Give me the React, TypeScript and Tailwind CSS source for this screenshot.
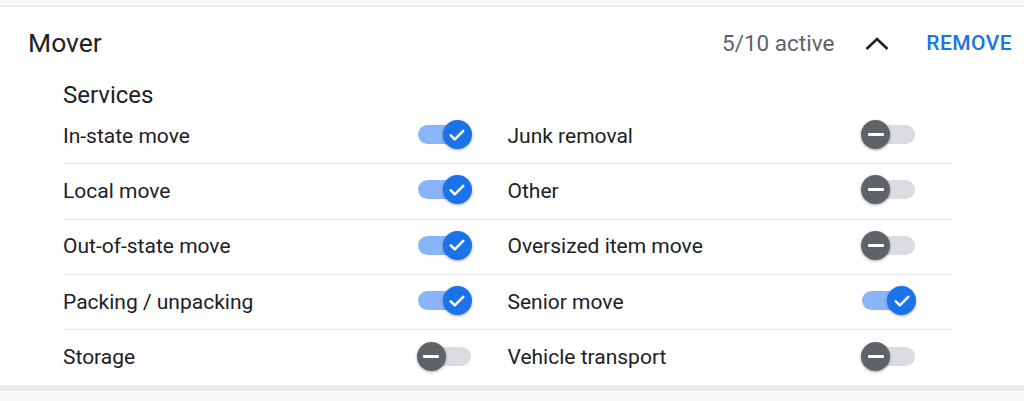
import React from "react";

const left: [string, boolean][] = [
  ["In-state move", true],
  ["Local move", true],
  ["Out-of-state move", true],
  ["Packing / unpacking", true],
  ["Storage", false],
];
const right: [string, boolean][] = [
  ["Junk removal", false],
  ["Other", false],
  ["Oversized item move", false],
  ["Senior move", true],
  ["Vehicle transport", false],
];

function Toggle({ on }: { on: boolean }) {
  return (
    <div className="relative w-[55px] h-[30px] shrink-0 -mt-[4px]">
      <div
        className={
          "absolute top-[6px] h-[19px] w-[44px] rounded-full " +
          (on ? "left-[1px] bg-[#8ab4f8]" : "left-[10px] bg-[#dadce0]")
        }
      />
      <div
        className={
          "absolute top-[1px] w-[29px] h-[29px] rounded-full flex items-center justify-center shadow-[0_1px_3px_rgba(0,0,0,0.35)] " +
          (on ? "left-[26px] bg-[#1a73e8]" : "left-0 bg-[#5f6368]")
        }
      >
        {on ? (
          <svg width="20" height="20" viewBox="0 0 24 24">
            <path d="M4.5 12.5l4.8 4.8L19.5 7" fill="none" stroke="#fff" strokeWidth="3" strokeLinecap="round" strokeLinejoin="round" />
          </svg>
        ) : (
          <div className="w-[16px] h-[3px] bg-white rounded-[1px]" />
        )}
      </div>
    </div>
  );
}

function Row({ label, on, last }: { label: string; on: boolean; last: boolean }) {
  return (
    <div
      className={
        "h-[55.3px] flex items-center justify-between pr-[36px] " +
        (last ? "" : "border-b border-[#e8eaed]")
      }
    >
      <span className="text-[21px] text-[#202124] leading-none">{label}</span>
      <Toggle on={on} />
    </div>
  );
}

export default function App() {
  return (
    <div
      className="w-[1024px] h-[401px] bg-[#f8f9fa] overflow-hidden"
      style={{ fontFamily: "Roboto, 'Noto Sans', sans-serif" }}
    >
      <div className="h-[6px] bg-[#f8f9fa]" />
      <div className="bg-white border-t border-[#e3e3e3]">
        <div className="h-[73px] flex items-center pl-[28px] pr-[12px]">
          <span className="text-[26.5px] text-[#202124] leading-none">Mover</span>
          <div className="ml-auto flex items-center">
            <span className="text-[22.5px] text-[#5f6368] leading-none">5/10 active</span>
            <svg className="ml-[30px]" width="26" height="16" viewBox="0 0 26 16">
              <path d="M2.5 13L13 3l10.5 10" fill="none" stroke="#202124" strokeWidth="2.6" />
            </svg>
            <span className="ml-[36px] text-[21px] font-medium text-[#1a73e8] tracking-[0.02em] leading-none">
              REMOVE
            </span>
          </div>
        </div>
        <div className="pl-[63px] h-[29px] flex items-center">
          <span className="text-[24px] text-[#202124] leading-none">Services</span>
        </div>
        <div className="ml-[63px] w-[889px] grid grid-cols-2">
          <div className="flex flex-col">
            {left.map(([l, on], i) => (
              <Row key={l} label={l} on={on} last={i === left.length - 1} />
            ))}
          </div>
          <div className="flex flex-col">
            {right.map(([l, on], i) => (
              <Row key={l} label={l} on={on} last={i === right.length - 1} />
            ))}
          </div>
        </div>
      </div>
      <div className="h-[6px] bg-[#e8eaed]" />
    </div>
  );
}
